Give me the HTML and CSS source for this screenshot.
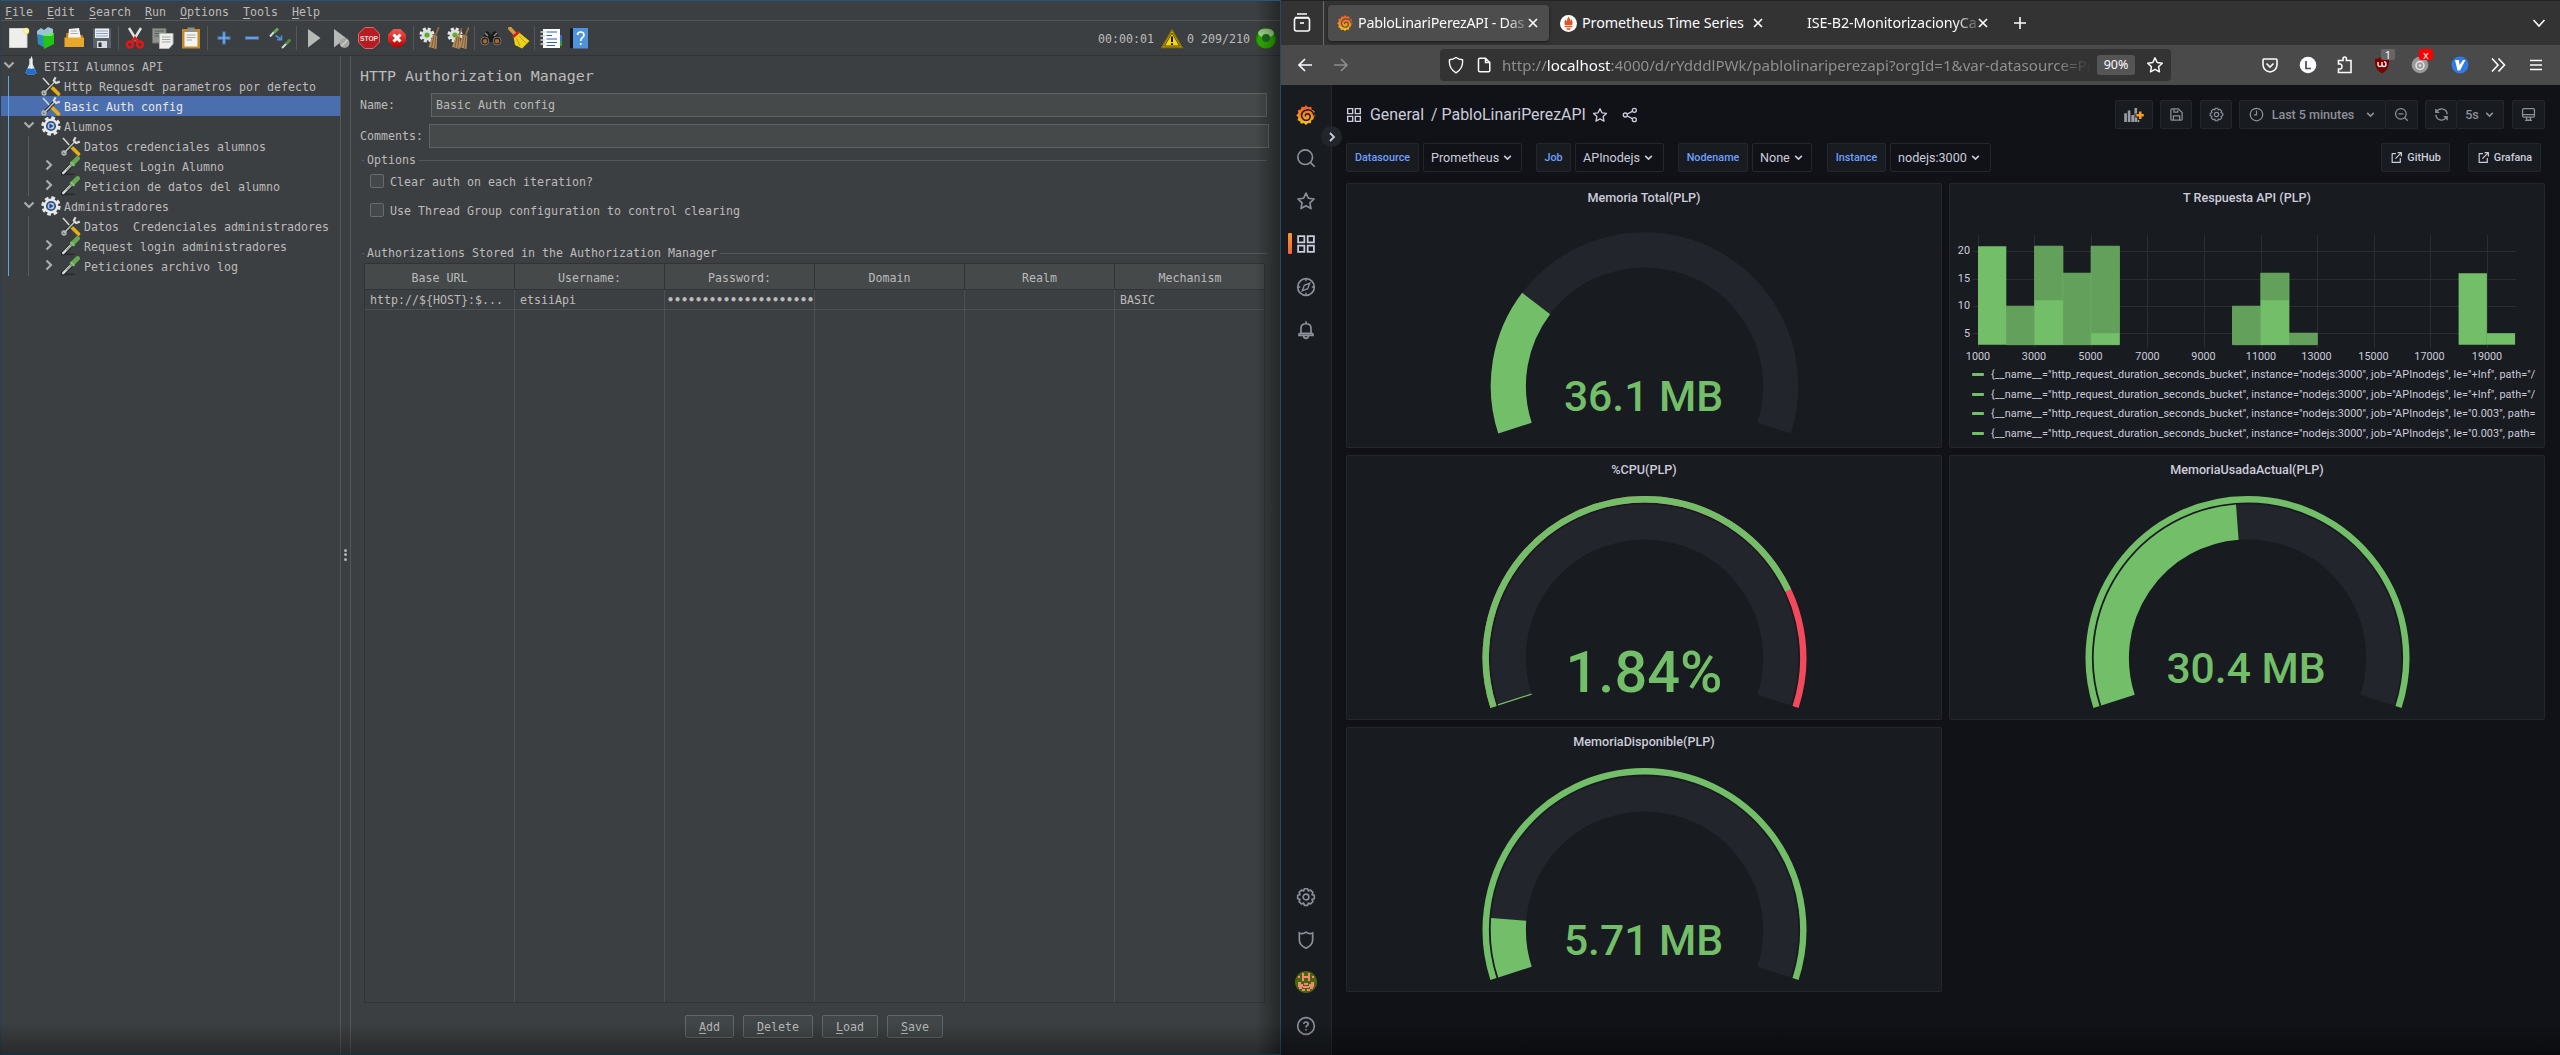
FILE: index.html
```html
<!DOCTYPE html>
<html lang="es">
<head>
<meta charset="utf-8">
<title>PabloLinariPerezAPI - Dashboards</title>
<link rel="stylesheet" href="styles.css">
</head>
<body>
<svg class="defs" width="0" height="0" aria-hidden="true">
  <defs>
    <linearGradient id="g-flame" x1="0" y1="0" x2="0" y2="1"><stop offset="0" stop-color="#f05a28"/><stop offset=".5" stop-color="#f7871f"/><stop offset="1" stop-color="#fbca0a"/></linearGradient>
    <radialGradient id="g-green" cx=".5" cy=".6" r=".55"><stop offset="0" stop-color="#35b505"/><stop offset=".7" stop-color="#2fa800"/><stop offset="1" stop-color="#0c5a00"/></radialGradient>
    <linearGradient id="g-red" x1="0" y1="0" x2="0" y2="1"><stop offset="0" stop-color="#ee5a50"/><stop offset="1" stop-color="#c00000"/></linearGradient>
    <symbol id="tools" viewBox="0 0 20 20"><path d="M2 2L10 11" stroke="#d8d8d4" stroke-width="1.5"/><path d="M10.5 11L17.5 18" stroke="#e8ae10" stroke-width="3.6" stroke-linecap="round"/><path d="M2.5 17.5L14.5 5" stroke="#24282a" stroke-width="3.4"/><path d="M2.5 17.5L14.5 5" stroke="#b9bcb6" stroke-width="1.8"/><circle cx="3" cy="17" r="2" fill="none" stroke="#b9bcb6" stroke-width="1.4"/><path d="M14.6 1.2L12.8 4.6L15 7L18.8 5.6" fill="none" stroke="#d7d9d4" stroke-width="2.2"/></symbol>
    <symbol id="cog" viewBox="0 0 20 20"><circle cx="10" cy="10" r="8" fill="none" stroke="#e4e6e4" stroke-width="3.4" stroke-dasharray="3.6 2.683"/><circle cx="10" cy="10" r="7.4" fill="#e8eae8"/><circle cx="10" cy="10" r="4.2" fill="#b4c6e2" stroke="#34568e" stroke-width="1.8"/><path d="M8.4 7.4V12.600L12.600 10z" fill="#24457e"/></symbol>
    <symbol id="dropper" viewBox="0 0 20 20"><ellipse cx="8" cy="18.2" rx="6.5" ry="1" fill="#2a2d2f"/><path d="M2 17.5L12 7.2" stroke="#1f2224" stroke-width="4.2" stroke-linecap="round"/><path d="M2.2 17.2L12 7.2" stroke="#d5dbd5" stroke-width="2.4" stroke-linecap="round"/><path d="M5.2 14.3L11 8.3" stroke="#6d7a6c" stroke-width="1"/><path d="M11.2 7.8L16.6 2.4" stroke="#66a852" stroke-width="4.6" stroke-linecap="round"/><path d="M9.7 6L13.5 9.9" stroke="#87bf74" stroke-width="1.8"/></symbol>
    <symbol id="flask" viewBox="0 0 20 20"><ellipse cx="10" cy="18" rx="6.5" ry="1.3" fill="#25282a"/><path d="M8.3 2.5H11.7V8L15.5 17Q15.5 18.6 10 18.6Q4.500 18.6 4.500 17L8.300 8z" fill="#dce6ee"/><path d="M6.500 12.500H13.500L15.500 17Q15.500 18.600 10 18.600Q4.500 18.600 4.500 17z" fill="#1f6fd0"/><path d="M10.600 .5V13" stroke="#eef3f7" stroke-width="1"/></symbol>
    <symbol id="down" viewBox="0 0 12 12"><path d="M1.500 3.500L6 8L10.500 3.500" fill="none" stroke="#a9acad" stroke-width="2.200"/></symbol>
    <symbol id="right" viewBox="0 0 12 12"><path d="M3.500 1.500L8 6L3.500 10.500" fill="none" stroke="#a9acad" stroke-width="2.200"/></symbol>
    <symbol id="chev" viewBox="0 0 10 10"><path d="M2 3.500L5 6.500L8 3.500" fill="none" stroke="currentColor" stroke-width="1.400"/></symbol>
    <symbol id="close" viewBox="0 0 12 12"><path d="M2 2L10 10M10 2L2 10" fill="none" stroke="#fbfbfe" stroke-width="1.700"/></symbol>
    <symbol id="flame" viewBox="0 0 24 24"><path d="M12 0L14.300 2.600L18.300 2L18.800 5.600L22.300 7.200L21.600 10.700L23.600 13.500H21.600L21 17L18.500 18.200L17.600 22L14.600 21.600L12 24L9.300 21.700L5.800 22.600L4.900 19.400L1.800 18.200L2.800 14.900L.3 12.300L2.800 9.800L2.200 6.200L5.700 5.300L6.800 1.900L10 2.700z" fill="url(#g-flame)"/><path d="M21.500 12.200C20.500 7.500 16.500 5.500 13 5.900C8.700 6.400 6.200 9.800 6.700 13.400C7.200 16.900 10.500 19 13.800 18.200C17 17.400 18 13.700 16.200 11.600C14.500 9.700 11.500 10.400 11.200 12.800" fill="none" stroke="currentColor" stroke-width="1.800" stroke-linecap="round"/></symbol>
    <symbol id="star" viewBox="0 0 24 24"><path d="M12 2.500L14.900 8.700L21.700 9.600L16.700 14.300L18 21.100L12 17.800L6 21.100L7.300 14.300L2.300 9.600L9.100 8.700z" fill="none" stroke="currentColor" stroke-width="2" stroke-linejoin="round"/></symbol>
    <symbol id="apps" viewBox="0 0 24 24"><path d="M2.500 2.500H10V10H2.500zM14 2.500H21.500V10H14zM2.500 14H10V21.500H2.500zM14 14H21.500V21.500H14z" fill="none" stroke="currentColor" stroke-width="2.100"/></symbol>
    <symbol id="gear" viewBox="0 0 24 24"><path d="M10 2H14L14.800 4.800L17.500 3.700L20.300 6.500L19.200 9.200L22 10V14L19.200 14.800L20.300 17.500L17.500 20.300L14.800 19.200L14 22H10L9.200 19.200L6.500 20.300L3.700 17.500L4.800 14.800L2 14V10L4.800 9.200L3.700 6.500L6.500 3.700L9.200 4.800z" fill="none" stroke="currentColor" stroke-width="1.900" stroke-linejoin="round"/><circle cx="12" cy="12" r="3.500" fill="none" stroke="currentColor" stroke-width="1.900"/></symbol>
    <symbol id="ext" viewBox="0 0 24 24"><path d="M11 5H4V21H19V13M14 3H21V10M21 3L10 14" fill="none" stroke="currentColor" stroke-width="2.200" stroke-linejoin="round"/></symbol>
    <symbol id="brush" viewBox="0 0 12 22"><path d="M11.500 0L8 8" stroke="#8c6a43" stroke-width="1.800"/><path d="M5.500 7.500L9.800 9L9 22L1 20z" fill="#b58c5c"/><path d="M6.500 9L4 20.500M8.300 9.500L7 21" stroke="#70502c" stroke-width=".8"/></symbol>
    <symbol id="wheel" viewBox="0 0 16 16"><circle cx="8" cy="8" r="5.800" fill="none" stroke="#e8e8e8" stroke-width="3.600" stroke-dasharray="2.800 1.750"/><circle cx="8" cy="8" r="5.500" fill="#dedede"/><circle cx="8" cy="8" r="2.600" fill="#5fae28"/></symbol>
  </defs>
</svg>

<div class="desktop">
<section class="jmeter">
  <nav class="menu"><span><u>F</u>ile</span><span><u>E</u>dit</span><span><u>S</u>earch</span><span><u>R</u>un</span><span><u>O</u>ptions</span><span><u>T</u>ools</span><span><u>H</u>elp</span></nav>
  <div class="toolbar">
    <i><svg viewBox="0 0 22 22"><path d="M1.500 1.500H19V20.500H1.500z" fill="#eeeeec" stroke="#d0d0cc"/><circle cx="18" cy="4" r="3.200" fill="#f7ee8a"/><circle cx="18" cy="4" r="1.500" fill="#fff9c8"/></svg></i>
    <i><svg viewBox="0 0 22 22"><path d="M1 4L5 1L8 3L12 0L17 2V9H1z" fill="#9cc4d4"/><path d="M1 7L9 9V21L2 17z" fill="#2b8db8"/><path d="M7 9L18 6V17L8 22z" fill="#22c516"/><path d="M7 9L10 7L18 6L16 9z" fill="#74e867"/></svg></i>
    <i><svg viewBox="0 0 22 22"><path d="M2 6H9L10 8H19V20H2z" fill="#b97a10"/><path d="M5 2L15 1L17 11H4z" fill="#f4f4f2"/><path d="M6.500 4H13M6.500 6.500H14" stroke="#aaa"/><path d="M.5 10.500H20V20H.5z" fill="#e9a828"/></svg></i>
    <i><svg viewBox="0 0 22 22"><path d="M1 1.500H19V21H1z" fill="#59616b"/><path d="M3 1.500H17V11H3z" fill="#e9eef4"/><path d="M4 4H16M4 6.500H16M4 9H16" stroke="#8ea3bd"/><path d="M5 14H15V21H5z" fill="#d8dadc"/><path d="M6.500 15.500H9.500V20H6.500z" fill="#2e3338"/></svg></i>
    <b></b>
    <i><svg viewBox="0 0 22 22"><path d="M5 1L13 14M17 1L9 14" stroke="#e4e4e2" stroke-width="2.400"/><g fill="none" stroke="#e01818" stroke-width="2.600"><circle cx="6" cy="17.500" r="2.900"/><circle cx="16" cy="17.500" r="2.900"/><path d="M8 15L11 11L14 15"/></g></svg></i>
    <i><svg viewBox="0 0 22 22"><path d="M.5 1.500H14V16H.5z" fill="#8f918f" stroke="#6d6f6d"/><path d="M2.500 4H12M2.500 6.500H8M2.500 9H8" stroke="#5a5c5a"/><path d="M7.500 6.500H21V17L17 21.500H7.500z" fill="#eeeeec" stroke="#b5b7b3"/><path d="M10 10H18.500M10 12.500H18.500M10 15H18.500" stroke="#a5a7a3"/></svg></i>
    <i><svg viewBox="0 0 22 22"><path d="M2 2H20V21.500H2z" fill="#c48a28"/><path d="M4.500 5H17.500V19.500H4.500z" fill="#f4f4f2"/><path d="M7.500 .5H14.500V5H7.500z" fill="#8f918f"/><path d="M6.500 8H15.500M6.500 10.500H15.500M6.500 13H12" stroke="#a5a7a3"/></svg></i>
    <b></b>
    <i><svg viewBox="0 0 22 22"><path d="M11 4.500V17.500M4.500 11H17.500" stroke="#3f78be" stroke-width="3.400"/><path d="M11 5.500V16.500M5.500 11H16.500" stroke="#8ab8ee" stroke-width="1.200"/></svg></i>
    <i><svg viewBox="0 0 22 22"><path d="M4 11H18" stroke="#3f78be" stroke-width="3.400"/><path d="M5 11H17" stroke="#8ab8ee" stroke-width="1.200"/></svg></i>
    <i><svg viewBox="0 0 22 22"><path d="M1 9.500L5 5" stroke="#d5dbd5" stroke-width="2"/><path d="M5 5.500L9 1.500" stroke="#66a852" stroke-width="3"/><path d="M13 21L17.500 16.500" stroke="#d5dbd5" stroke-width="2"/><path d="M17 17L21.500 12.500" stroke="#4f8f44" stroke-width="3"/><path d="M6.500 8.500L12.500 12.500M12.500 8.500V12.800H8" fill="none" stroke="#4a8fe0" stroke-width="1.600"/></svg></i>
    <b></b>
    <i><svg viewBox="0 0 22 22"><path d="M6 2L18.500 11L6 20.500z" fill="#b7b9b7"/></svg></i>
    <i><svg viewBox="0 0 22 22"><path d="M4 2L16 11L4 20.500z" fill="#b7b9b7"/><circle cx="14.500" cy="16" r="5" fill="#a3a5a3"/><path d="M11.500 19L17.500 13" stroke="#cfd1cf" stroke-width="1.500"/></svg></i>
    <i><svg class="stop" viewBox="0 0 22 22"><path d="M6.800 .5H15.200L21.500 6.800V15.200L15.200 21.500H6.800L.5 15.200V6.800z" fill="#b71c22" stroke="#d9696c"/><text x="11" y="13.900" textLength="18" lengthAdjust="spacingAndGlyphs">STOP</text></svg></i>
    <i><svg viewBox="0 0 22 22"><path d="M7.500 2H14.500L20 7.500V14.500L14.500 20H7.500L2 14.500V7.500z" fill="url(#g-red)"/><path d="M7.500 7.500L14.500 14.500M14.500 7.500L7.500 14.500" stroke="#fff" stroke-width="3"/></svg></i>
    <b></b>
    <i><svg viewBox="0 0 22 22"><use href="#wheel" width="16" height="16"/><use href="#brush" x="8.500" width="12" height="22"/></svg></i>
    <i><svg viewBox="0 0 22 22"><use href="#wheel" width="16" height="16"/><use href="#brush" x="4" y="1" width="11.500" height="21"/><use href="#brush" x="10.500" width="12" height="22"/></svg></i>
    <b></b>
    <i><svg viewBox="0 0 22 22"><path d="M6 4L9 5L11 8L13 5L16 4L21.500 15H.5z" fill="#1b1b1b"/><path d="M5 6L8 9M17 6L14 9" stroke="#8a8a88" stroke-width="1.500"/><circle cx="4.800" cy="14" r="4" fill="#2a211c" stroke="#777"/><circle cx="17.200" cy="14" r="4" fill="#2a211c" stroke="#777"/><circle cx="5" cy="14.300" r="2.200" fill="#a6662e"/><circle cx="17" cy="14.300" r="2.200" fill="#a6662e"/></svg></i>
    <i><svg viewBox="0 0 22 22"><path d="M2 1.500L8 8" stroke="#d59a3c" stroke-width="3.800" stroke-linecap="round"/><path d="M5.500 9.500L10.500 5L21.500 14L14 21.500L7 18z" fill="#ecd11a"/><path d="M5 10L11 4.800" stroke="#cf2020" stroke-width="2.800"/><path d="M8.500 11L12 19M11 9L18 16" stroke="#b99c10"/></svg></i>
    <b></b>
    <i><svg viewBox="0 0 22 22"><path d="M18 8H22V14H18z" fill="#2f6fd6"/><path d="M18 14H22V19H18z" fill="#2da32d"/><path d="M3 2H20V21H3z" fill="#fdfdfd"/><path d="M6.500 5H17M6.500 8.500H12M6.500 12H17M6.500 15.500H17M6.500 18.500H15" stroke="#2f62b8"/><path d="M.5 5H5M.5 9H5M.5 13H5M.5 17H5" stroke="#d5d5d5" stroke-width="1.500"/></svg></i>
    <i><svg viewBox="0 0 22 22"><path d="M2 1.500H6V21H2z" fill="#15181c"/><path d="M5 1H20V21.500H5z" fill="#4f93dd"/><path d="M9.500 8Q9.500 5 12.700 5T16 8Q16 9.800 14 11Q12.700 12 12.700 14M12.700 16V18" fill="none" stroke="#fff" stroke-width="1.700"/></svg></i>
    <div class="status"><span>00:00:01</span><svg class="warn" viewBox="0 0 22 20"><path d="M11 1L21 18.500H1z" fill="#f5cf00" stroke="#8a7208" stroke-width="1.500"/><path d="M11 4L18.500 17H3.500z" fill="#f8d600" stroke="#2b2500" stroke-width=".8"/><path d="M11 7.500V13M11 14.200V16" stroke="#111" stroke-width="2"/></svg><span>0</span><span class="cnt">209/210</span><svg class="led" viewBox="0 0 22 22"><circle cx="11" cy="11" r="10.500" fill="url(#g-green)"/><ellipse cx="11" cy="6" rx="8" ry="4.600" fill="#cdf0c2" opacity=".7"/><circle cx="11" cy="11" r="4" fill="#1c7022"/></svg></div>
  </div>
  <div class="split">
    <div class="tree">
      <div class="row l0"><svg class="ar"><use href="#down"/></svg><svg class="ic"><use href="#flask"/></svg>ETSII Alumnos API</div>
      <div class="branch main">
        <div class="row l1"><svg class="ic"><use href="#tools"/></svg>Http Requesdt parametros por defecto</div>
        <div class="row l1 sel"><svg class="ic"><use href="#tools"/></svg>Basic Auth config</div>
        <div class="row l1"><svg class="ar"><use href="#down"/></svg><svg class="ic"><use href="#cog"/></svg>Alumnos</div>
        <div class="branch">
          <div class="row l2"><svg class="ic"><use href="#tools"/></svg>Datos credenciales alumnos</div>
          <div class="row l2"><svg class="ar"><use href="#right"/></svg><svg class="ic"><use href="#dropper"/></svg>Request Login Alumno</div>
          <div class="row l2"><svg class="ar"><use href="#right"/></svg><svg class="ic"><use href="#dropper"/></svg>Peticion de datos del alumno</div>
        </div>
        <div class="row l1"><svg class="ar"><use href="#down"/></svg><svg class="ic"><use href="#cog"/></svg>Administradores</div>
        <div class="branch">
          <div class="row l2"><svg class="ic"><use href="#tools"/></svg>Datos  Credenciales administradores</div>
          <div class="row l2"><svg class="ar"><use href="#right"/></svg><svg class="ic"><use href="#dropper"/></svg>Request login administradores</div>
          <div class="row l2"><svg class="ar"><use href="#right"/></svg><svg class="ic"><use href="#dropper"/></svg>Peticiones archivo log</div>
        </div>
      </div>
    </div>
    <div class="grip"><em></em><em></em><em></em></div>
    <div class="editor">
      <h1>HTTP Authorization Manager</h1>
      <div class="field name"><label>Name:</label><div class="input">Basic Auth config</div></div>
      <div class="field comm"><label>Comments:</label><div class="input"></div></div>
      <div class="legend-line opt">Options</div>
      <div class="check c1"><span class="box"></span>Clear auth on each iteration?</div>
      <div class="check"><span class="box"></span>Use Thread Group configuration to control clearing</div>
      <div class="legend-line auth">Authorizations Stored in the Authorization Manager</div>
      <div class="table">
        <div class="th"><span>Base URL</span><span>Username:</span><span>Password:</span><span>Domain</span><span>Realm</span><span>Mechanism</span></div>
        <div class="tr"><span>http://${HOST}:$...</span><span>etsiiApi</span><span class="pw">•••••••••••••••••••••</span><span></span><span></span><span>BASIC</span></div>
        <div class="tr fill"><span></span><span></span><span></span><span></span><span></span><span></span></div>
      </div>
      <div class="buttons"><button><u>A</u>dd</button><button><u>D</u>elete</button><button><u>L</u>oad</button><button><u>S</u>ave</button></div>
    </div>
  </div>
</section>

<section class="browser">
  <div class="tabs">
    <div class="view"><svg width="18" height="20" viewBox="0 0 18 20" fill="none" stroke="#fbfbfe" stroke-width="1.600"><path d="M4 1H14M2 4.500H16"/><rect x="1.500" y="5" width="15" height="13" rx="2"/><path d="M7 10H11"/></svg></div>
    <div class="tab active"><svg class="fav"><use href="#flame"/></svg><span class="tt">PabloLinariPerezAPI - Das</span><svg class="x"><use href="#close"/></svg></div>
    <div class="tab t2"><svg class="fav" viewBox="0 0 18 18"><circle cx="9" cy="9" r="9" fill="#fff"/><path d="M9 1.500Q11 4 10.700 6Q12 5 12 4Q14 7 13 10.500H5Q4 7 6 4.500Q6.200 6 7.200 6.500Q7.500 4 9 1.500zM5 11.500H13V13H5zM6.500 14H11.500Q11 16 9 16T6.500 14z" fill="#e75225"/></svg><span class="tt">Prometheus Time Series</span><svg class="x"><use href="#close"/></svg></div>
    <div class="tab t3"><span class="tt">ISE-B2-MonitorizacionyCa</span><svg class="x"><use href="#close"/></svg></div>
    <svg class="plus" viewBox="0 0 14 14"><path d="M7 1V13M1 7H13" stroke="#fbfbfe" stroke-width="1.600"/></svg>
    <svg class="all" viewBox="0 0 14 14"><path d="M1.500 4L7 10L12.500 4" fill="none" stroke="#fbfbfe" stroke-width="1.600"/></svg>
  </div>
  <div class="nav">
    <svg class="back" viewBox="0 0 16 16"><path d="M15 8H2M8 2L2 8L8 14" fill="none" stroke="#fbfbfe" stroke-width="1.700"/></svg>
    <svg class="fwd" viewBox="0 0 16 16"><path d="M1 8H14M8 2L14 8L8 14" fill="none" stroke="#8c8c8c" stroke-width="1.700"/></svg>
    <div class="url">
      <svg width="16" height="18" viewBox="0 0 16 18"><path d="M8 1.500Q11 3.500 14.500 3.800Q15.500 12.500 8 16.800Q.5 12.500 1.500 3.800Q5 3.500 8 1.500z" fill="none" stroke="#fbfbfe" stroke-width="1.400"/></svg>
      <svg class="doc" width="14" height="16" viewBox="0 0 14 16"><path d="M1.500 2.500Q1.500 1.200 3 1.200H8.500L12.800 5.500V13.500Q12.800 14.800 11.300 14.800H3Q1.500 14.800 1.500 13.500zM8.500 1.500V5.500H12.500" fill="none" stroke="#fbfbfe" stroke-width="1.500"/></svg>
      <span class="addr">http://<strong>localhost</strong>:4000/d/rYdddlPWk/pablolinariperezapi?orgId=1&amp;var-datasource=Pr</span>
      <span class="zoom">90%</span>
      <svg class="bm"><use href="#star"/></svg>
    </div>
    <div class="exts">
      <svg viewBox="0 0 20 20"><path d="M4 4H16Q17 4 17 5V10Q16.500 16 10 17Q3.500 16 3 10V5Q3 4 4 4zM6.500 8.500L10 12L13.500 8.500" fill="none" stroke="#fbfbfe" stroke-width="1.600"/></svg>
      <svg viewBox="0 0 20 20"><circle cx="10" cy="10" r="8.300" fill="#fbfbfe"/><path d="M8 6V13.500H13" fill="none" stroke="#4a4a4a" stroke-width="1.700"/></svg>
      <svg viewBox="0 0 20 20"><path d="M2.500 8V5.500H7V4Q7 2 8.700 2T10.400 4V5.500H15V17.500H2.500V14H4.500Q6 13.500 6 11.500T4.500 9H2.500z" fill="none" stroke="#fbfbfe" stroke-width="1.600"/></svg>
      <div class="ub"><svg viewBox="0 0 20 20"><path d="M10 1.500Q13 3.500 17 4Q18 14 10 18.500Q2 14 3 4Q7 3.500 10 1.500z" fill="#800000"/><path d="M6 7V10Q6 11.500 8 11.500T10 10V7M10 9Q10 11.500 12 11.500T14 9T12 7" fill="none" stroke="#fff" stroke-width="1.300"/></svg><span class="badge">1</span></div>
      <div class="ub"><svg viewBox="0 0 20 20"><circle cx="10" cy="10" r="8.300" fill="#9a9a9a"/><circle cx="10" cy="10.500" r="4" fill="none" stroke="#e5e5e5" stroke-width="1.500"/><circle cx="10" cy="10.500" r="1.300" fill="#e5e5e5"/></svg><span class="badge red">x</span></div>
      <svg viewBox="0 0 20 20"><circle cx="10" cy="10" r="8.500" fill="#2f7bea"/><path d="M5 5H9L9.500 10L13 5H15.500L10 15.500H7.500z" fill="#fff"/></svg>
      <svg viewBox="0 0 20 20"><path d="M4 3.500L10 10L4 16.500M10.500 3.500L16.500 10L10.500 16.500" fill="none" stroke="#fbfbfe" stroke-width="1.600"/></svg>
      <svg viewBox="0 0 20 20"><path d="M4 5.500H16M4 10H16M4 14.500H16" stroke="#fbfbfe" stroke-width="1.600"/></svg>
    </div>
  </div>
  <div class="grafana">
    <aside>
      <svg class="logo"><use href="#flame"/></svg>
      <svg viewBox="0 0 24 24" fill="none" stroke="currentColor" stroke-width="2"><circle cx="11" cy="11" r="8.800"/><path d="M17.500 17.500L22.500 22.500"/></svg>
      <svg><use href="#star"/></svg>
      <div class="cur"><svg><use href="#apps"/></svg></div>
      <svg viewBox="0 0 24 24" fill="none" stroke="currentColor" stroke-width="2"><circle cx="12" cy="12" r="10"/><path d="M16.500 7.500L14 14L7.500 16.500L10 10zM12 2V5M12 19V22M2 12H5M19 12H22" stroke-width="1.600"/></svg>
      <svg viewBox="0 0 24 24" fill="none" stroke="currentColor" stroke-width="2"><path d="M12 1.500V4M6 16V10Q6 4.500 12 4.500T18 10V16M5 16H19Q20.500 16 20.500 18.500H3.500Q3.500 16 5 16zM9 19Q9.500 22 12 22T15 19"/></svg>
      <div class="grow"></div>
      <svg><use href="#gear"/></svg>
      <svg viewBox="0 0 24 24" fill="none" stroke="currentColor" stroke-width="2"><path d="M4 3.500Q8 5.500 12 2.500Q16 5.500 20 3.500V12Q20 18 12 22Q4 18 4 12z"/></svg>
      <svg class="avatar" viewBox="0 0 22 22"><circle cx="11" cy="11" r="11" fill="#4b6410"/><path d="M7 2H9V5H13V2H15V10H13V7H9V10H7zM3 5H5V7H3zM17 5H19V7H17zM3 11H6V13H8V16H7V18H10V20H7V18H4V16H3zM19 11H16V13H14V16H15V18H12V20H15V18H18V16H19zM9 12H13V14H9zM8 15H14V17H8z" fill="#f08a74"/></svg>
      <svg viewBox="0 0 24 24" fill="none" stroke="currentColor" stroke-width="2"><circle cx="12" cy="12" r="10"/><path d="M9.300 9.500Q9.500 7.200 12 7.200T14.700 9.500Q14.700 10.800 13 11.700Q12 12.300 12 13.800M12 15.500V17.500"/></svg>
      <span class="expand"><svg viewBox="0 0 12 12"><path d="M4 2L8 6L4 10" fill="none" stroke="#ccccdc" stroke-width="1.800"/></svg></span>
    </aside>
    <main>
      <header>
        <svg class="ha"><use href="#apps"/></svg><span class="gen">General</span><span class="sl">/</span><span class="dash">PabloLinariPerezAPI</span>
        <svg class="hs"><use href="#star"/></svg>
        <svg class="hsh" viewBox="0 0 24 24" fill="none" stroke="currentColor" stroke-width="2"><circle cx="5" cy="12" r="3"/><circle cx="18.500" cy="5" r="3"/><circle cx="18.500" cy="19" r="3"/><path d="M8 10.500L15.500 6.500M8 13.500L15.500 17.500"/></svg>
        <div class="grow"></div>
        <div class="btn b1"><svg class="wide" viewBox="0 0 22 18"><path d="M1.500 17V7M5.500 17V4M9.500 17V9M13 17V1" stroke="#9a9ba6" stroke-width="3"/><path d="M15 12H17V17H15z" fill="#9a9ba6"/><path d="M17.500 4.500V14.500M12.500 9.500H22" stroke="#181b1f" stroke-width="4.500"/><path d="M18 5V13.500M13.500 9.300H22" stroke="#fb9b1d" stroke-width="3"/></svg></div>
        <div class="btn b2"><svg viewBox="0 0 24 24" fill="none" stroke="currentColor" stroke-width="2"><path d="M3 5Q3 3 5 3H15L21 9V19Q21 21 19 21H5Q3 21 3 19zM8 3V8H14V5M7 21V14H17V21"/></svg></div>
        <div class="btn b3"><svg><use href="#gear"/></svg></div>
        <div class="btn b4"><svg viewBox="0 0 24 24" fill="none" stroke="currentColor" stroke-width="2"><circle cx="12" cy="12" r="10"/><path d="M12 5.500V12.500H8"/></svg><span>Last 5 minutes</span><svg class="cv"><use href="#chev"/></svg></div>
        <div class="btn b5"><svg viewBox="0 0 24 24" fill="none" stroke="currentColor" stroke-width="2"><circle cx="11" cy="11" r="8.500"/><path d="M17 17L22 22M7 11H15"/></svg></div>
        <div class="btn b6"><svg viewBox="0 0 24 24" fill="none" stroke="currentColor" stroke-width="2.200"><path d="M3 3V8.500H8.500M3.800 8Q7 2.500 13 3Q20.500 4 21 11.500M21 21V15.500H15.500M20.200 16Q17 21.500 11 21Q3.500 20 3 12.500"/></svg></div>
        <div class="btn b7"><span>5s</span><svg class="cv"><use href="#chev"/></svg></div>
        <div class="btn b8"><svg viewBox="0 0 24 24" fill="none" stroke="currentColor" stroke-width="2"><path d="M4.500 2.500H19.500Q21.500 2.500 21.500 4.500V14Q21.500 16 19.500 16H4.500Q2.500 16 2.500 14V4.500Q2.500 2.500 4.500 2.500zM2.500 12H21.500M9 16V21H15V16M6.500 21.500H17.500"/></svg></div>
      </header>
      <div class="vars">
        <span class="vl w1">Datasource</span><span class="vv v1">Prometheus<svg class="cv"><use href="#chev"/></svg></span>
        <span class="vl w2">Job</span><span class="vv v2">APInodejs<svg class="cv"><use href="#chev"/></svg></span>
        <span class="vl w3">Nodename</span><span class="vv v3">None<svg class="cv"><use href="#chev"/></svg></span>
        <span class="vl w4">Instance</span><span class="vv v4">nodejs:3000<svg class="cv"><use href="#chev"/></svg></span>
        <div class="grow"></div>
        <span class="lk k1"><svg><use href="#ext"/></svg>GitHub</span><span class="lk k2"><svg><use href="#ext"/></svg>Grafana</span>
      </div>
      <div class="grid">
        <article><h2>Memoria Total(PLP)</h2>
          <svg class="gauge" viewBox="0 0 596 264"><path class="track" d="M168.970 245.090A136.200 136.200 0 1 1 428.030 245.090"/><path class="val" pathLength="100" stroke-dasharray="25.600 200" d="M168.970 245.090A136.200 136.200 0 1 1 428.030 245.090"/><text x="297.500" y="227.500">36.1 MB</text></svg></article>
        <article><h2>T Respuesta API (PLP)</h2>
          <div class="hist">
            <svg viewBox="0 0 596 132" class="plot">
              <path class="gl" d="M24 17.500H567M24 45.500H567M24 72.500H567M24 99.500H567M29.500 1V114M85.500 1V114M142.500 1V114M198.500 1V114M255.500 1V114M312.500 1V114M368.500 1V114M425.500 1V114M481.500 1V114M538.500 1V114"/>
              <g class="dim"><path d="M57.300 72.200h28.300V110.700h-28.300z"/><path d="M85.600 12.200h28.300V110.700h-28.300z"/><path d="M113.900 39.200h28.200V110.700h-28.200z"/><path d="M142.100 12.200h28.300V110.700h-28.300z"/><path d="M283.500 72.200h28.300V110.700h-28.300z"/><path d="M311.800 39.200h28.200V110.700h-28.200z"/><path d="M340 99.200h28.300V110.700H340z"/></g>
              <g class="lit"><path d="M29 12.200h28.300V110.700H29z"/><path d="M85.600 66.200h28.300V110.700h-28.300z"/><path d="M142.100 99.200h28.300V110.700h-28.300z"/><path d="M311.800 66.200h28.200V110.700h-28.200z"/><path d="M509.600 39.200h28.300V110.700h-28.300z"/><path d="M537.900 99.200h28.200V110.700h-28.200z"/></g>
              <g class="yt"><text x="21" y="20">20</text><text x="21" y="48">15</text><text x="21" y="75">10</text><text x="21" y="102.500">5</text></g>
              <g class="xt"><text x="29" y="126">1000</text><text x="85" y="126">3000</text><text x="141.500" y="126">5000</text><text x="198.500" y="126">7000</text><text x="254.500" y="126">9000</text><text x="312" y="126">11000</text><text x="367.500" y="126">13000</text><text x="424.500" y="126">15000</text><text x="480.500" y="126">17000</text><text x="538" y="126">19000</text></g>
            </svg>
            <ul><li>{__name__="http_request_duration_seconds_bucket", instance="nodejs:3000", job="APInodejs", le="+Inf", path="/</li><li>{__name__="http_request_duration_seconds_bucket", instance="nodejs:3000", job="APInodejs", le="+Inf", path="/</li><li>{__name__="http_request_duration_seconds_bucket", instance="nodejs:3000", job="APInodejs", le="0.003", path=</li><li>{__name__="http_request_duration_seconds_bucket", instance="nodejs:3000", job="APInodejs", le="0.003", path=</li></ul>
          </div></article>
        <article><h2>%CPU(PLP)</h2>
          <svg class="gauge" viewBox="0 0 596 264"><path class="track" d="M168.970 245.090A136.200 136.200 0 1 1 428.030 245.090"/><path class="val" pathLength="100" stroke-dasharray=".25 200" d="M168.970 245.090A136.200 136.200 0 1 1 428.030 245.090"/><path class="ring hot" d="M147.470 252.070A158.800 158.800 0 1 1 449.530 252.070"/><path class="ring" pathLength="100" stroke-dasharray="80 200" d="M147.470 252.070A158.800 158.800 0 1 1 449.530 252.070"/><text class="big" x="298" y="237">1.84%</text></svg></article>
        <article><h2>MemoriaUsadaActual(PLP)</h2>
          <svg class="gauge" viewBox="0 0 596 264"><path class="track" d="M168.970 245.090A136.200 136.200 0 1 1 428.030 245.090"/><path class="val" pathLength="100" stroke-dasharray="48 200" d="M168.970 245.090A136.200 136.200 0 1 1 428.030 245.090"/><path class="ring" d="M147.470 252.070A158.800 158.800 0 1 1 449.530 252.070"/><text x="297" y="227.500">30.4 MB</text></svg></article>
        <article><h2>MemoriaDisponible(PLP)</h2>
          <svg class="gauge" viewBox="0 0 596 264"><path class="track" d="M168.970 245.090A136.200 136.200 0 1 1 428.030 245.090"/><path class="val" pathLength="100" stroke-dasharray="10.400 200" d="M168.970 245.090A136.200 136.200 0 1 1 428.030 245.090"/><path class="ring" d="M147.470 252.070A158.800 158.800 0 1 1 449.530 252.070"/><text x="297.500" y="227.500">5.71 MB</text></svg></article>
      </div>
    </main>
  </div>
</section>
</div>
</body>
</html>
```
FILE: styles.css
```css
* { box-sizing: border-box; }
body { margin: 0; background: #111217; }
.defs { position: absolute; }
svg { display: block; flex: none; }
.desktop { position: relative; display: flex; width: 2560px; height: 1055px; overflow: hidden; }
.desktop::after { content: ""; position: absolute; left: 0; right: 0; bottom: 0; height: 32px; background: linear-gradient(transparent, rgba(0, 0, 0, .35)); pointer-events: none; }
.grow { flex: 1; }

/* JMeter window */
.jmeter { position: relative; width: 1281px; height: 1055px; display: flex; flex-direction: column; background: #3c3f41; border: 1px solid #23486a; border-top-color: #205680; border-left-color: #2c3e50; color: #bbb; font: 11.630px/20px "DejaVu Sans Mono", "Liberation Mono", monospace; }
.jmeter::after { content: ""; position: absolute; top: 0; right: 0; bottom: 0; width: 24px; background: linear-gradient(90deg, transparent, rgba(0, 0, 0, .38)); pointer-events: none; }
.jmeter u { text-underline-offset: 2px; }
.menu { display: flex; gap: 14px; height: 20px; padding-left: 4px; line-height: 22px; border-bottom: 1px solid #565656; }
.toolbar { display: flex; align-items: center; height: 35px; padding-left: 3.600px; border-bottom: 1px solid #313335; }
.toolbar i { width: 28px; height: 22px; padding-left: 3px; }
.toolbar i svg { width: 22px; height: 22px; }
.toolbar b { width: 1px; height: 24px; margin: 0 1.900px; background: #555759; }
.stop text { font: bold 7.500px "Liberation Sans", sans-serif; fill: #f4dcdc; text-anchor: middle; }
.status { display: flex; align-items: center; margin-left: auto; margin-right: 3px; line-height: 22px; padding-top: 1px; }
.warn { width: 22px; height: 20px; margin: 0 4px 0 7px; }
.cnt { margin-left: 7px; }
.led { width: 22px; height: 22px; margin-left: 5px; margin-top: -1px; }
.split { flex: 1; display: flex; min-height: 0; }
.tree { width: 340px; border-right: 1px solid #555759; }
.row { display: flex; align-items: center; height: 20px; line-height: 22px; padding-top: 1px; white-space: pre; }
.row .ic { width: 20px; height: 20px; margin-right: 3px; margin-top: -2px; }
.row .ar { width: 12px; height: 12px; margin-top: -3px; }
.l0 { padding-left: 2px; }
.l0 .ar { margin-right: 6px; }
.l1 { padding-left: 40px; }
.l1 .ar { margin: -3px 6px 0 -18px; }
.l2 { padding-left: 60px; }
.l2 .ar { margin: -3px 6px 0 -18px; }
.branch { position: relative; }
.branch::before { content: ""; position: absolute; left: 27px; top: 0; bottom: 0; width: 1px; background: #585b5d; }
.branch.main::before { left: 7px; background: #59a9e8; z-index: 1; }
.sel { background: #4b6eaf; color: #e6e6e6; }
.grip { width: 10px; border-right: 1px solid #555759; display: flex; flex-direction: column; align-items: center; justify-content: center; gap: 1.500px; padding-bottom: 1px; }
.grip em { width: 3px; height: 3px; border-radius: 50%; background: #afb1b3; }
.editor { flex: 1; display: flex; flex-direction: column; padding: 8px 11px 16px 8px; min-width: 0; }
.editor h1 { margin: 0; font-size: 14.950px; font-weight: 400; line-height: 24px; padding-left: 1px; height: 28px; }
.field { display: flex; align-items: center; height: 24px; padding-left: 1px; }
.field label { width: 71px; line-height: 24px; }
.input { flex: 1; height: 24px; border: 1px solid #646464; background: #45494a; padding-left: 4px; line-height: 23px; }
.name { margin-bottom: 7px; margin-top: 1px; padding-right: 2px; }
.comm label { width: 69px; }
.legend-line { display: flex; align-items: center; height: 20px; gap: 3px; padding-left: 3px; padding-right: 2px; }
.legend-line::before { content: ""; width: 2px; height: 1px; background: #5c5f61; }
.legend-line::after { content: ""; flex: 1; height: 1px; background: #555759; }
.opt { margin-top: 2px; }
.check { display: flex; align-items: center; gap: 6px; height: 29px; padding-left: 11px; line-height: 30px; }
.c1 { margin-top: -3px; }
.box { width: 14px; height: 14px; border: 1px solid #6b6b6b; border-radius: 2px; background: #43494a; margin-top: -1px; }
.auth { margin-top: 18px; }
.table { flex: 1; display: flex; flex-direction: column; margin: 0 4px 12px 5px; border: 1px solid #313335; min-height: 0; }
.th, .tr { display: grid; grid-template-columns: repeat(6, 150px); }
.th { height: 26px; background: #45494a; border-bottom: 1px solid #313335; text-align: center; line-height: 29px; }
.th span { border-right: 1px solid #313335; }
.tr { height: 20px; border-bottom: 1px solid #4d5052; line-height: 21px; }
.tr span { border-right: 1px solid #4d5052; padding-left: 5px; overflow: hidden; }
.tr .pw { padding-left: 2px; font-weight: 700; }
.th span:last-child, .tr span:last-child { border-right: 0; }
.tr.fill { flex: 1; border: 0; }
.buttons { display: flex; justify-content: center; gap: 9px; height: 23px; }
.buttons button { height: 23px; border: 1px solid #646769; border-radius: 2px; background: #414748; box-shadow: 0 1px 0 #323537; color: #bbb; font: inherit; line-height: 22px; padding: 0 13px; }

/* Browser chrome */
.browser { flex: 1; display: flex; flex-direction: column; background: #333; color: #fbfbfe; font: 14.300px/20px "Noto Sans", sans-serif; min-width: 0; border-top: 1px solid #222; }
.tabs { display: flex; align-items: center; height: 44px; }
.view { width: 43px; height: 44px; display: flex; align-items: center; padding-left: 12px; border-right: 1px solid #6a6a6a; }
.tab { display: flex; align-items: center; height: 36px; border-radius: 4px; white-space: nowrap; }
.active { width: 221px; margin-left: 4px; padding-left: 9px; background: #4d4d4d; box-shadow: 0 1px 3px #1a1a1a; }
.tt { flex: none; }
.active .tt, .t3 .tt { mask-image: linear-gradient(90deg, #000 calc(100% - 22px), rgba(0, 0, 0, .2)); }
.active .fav { width: 16px; height: 16px; margin-right: 5px; color: #4d4d4d; }
.active .tt { width: 169px; letter-spacing: -.25px; }
.x { width: 12px; height: 12px; }
.t2 { margin-left: 11px; }
.t2 .fav { width: 17px; height: 17px; margin-right: 5px; }
.t2 .tt { width: 170px; letter-spacing: -.05px; }
.t3 { margin-left: 43px; }
.t3 .tt { width: 170px; letter-spacing: -.1px; }
.plus { width: 14px; height: 14px; margin-left: 24px; }
.all { width: 14px; height: 14px; margin-left: auto; margin-right: 14px; }
.nav { display: flex; align-items: center; height: 40px; background: #4a4a4a; padding-left: 16px; }
.back, .fwd { width: 16px; height: 16px; }
.fwd { margin-left: 20px; }
.url { display: flex; align-items: center; width: 731px; height: 32px; margin-left: 91px; background: #333; border-radius: 4px; padding-left: 8px; font-size: 15.100px; }
.doc { margin-left: 13px; }
.addr { flex: 1; min-width: 0; margin-left: 11px; white-space: nowrap; color: #8f8f8f; mask-image: linear-gradient(90deg, #000 calc(100% - 34px), transparent); }
.addr strong { color: #fbfbfe; font-weight: 400; }
.zoom { flex: none; width: 38px; height: 20px; margin-left: 6px; border-radius: 3px; background: #555; text-align: center; font-size: 12.500px; }
.bm { width: 18px; height: 18px; margin: 0 7px 0 11px; }
.exts { display: flex; justify-content: space-between; width: 286px; margin-left: 89px; }
.exts svg { width: 20px; height: 20px; }
.ub { position: relative; left: -2px; }
.badge { position: absolute; left: 9px; top: -6px; width: 14px; height: 11px; border-radius: 2px; background: #666; font-size: 11px; line-height: 11px; text-align: center; }
.red { background: #f00; }

/* Grafana */
.grafana { flex: 1; display: flex; background: #111217; color: #ccccdc; font: 12.600px/20px Roboto, sans-serif; min-height: 0; }
aside { position: relative; width: 51px; display: flex; flex-direction: column; align-items: center; gap: 23px; padding: 20px 1px 19px 0; background: #181b1f; border-right: 1px solid #25272c; color: #8e8f99; }
aside svg { width: 20px; height: 20px; }
aside .logo { color: #181b1f; }
.cur { position: relative; color: #ccccdc; }
.cur::before { content: ""; position: absolute; left: -8px; top: -1px; width: 4px; height: 21px; border-radius: 1px; background: linear-gradient(#ff9830, #f55f3e); }
aside .avatar { width: 22px; height: 22px; margin-top: -2px; }
.expand { position: absolute; left: 40px; top: 41px; width: 21px; height: 21px; display: grid; place-items: center; border-radius: 50%; background: #22252b; }
.expand svg { width: 12px; height: 12px; }
main { flex: 1; display: flex; flex-direction: column; padding: 15px 15px 0 14px; min-width: 0; }
header { display: flex; align-items: center; height: 29px; font-size: 15.900px; white-space: nowrap; }
.ha { width: 16px; height: 16px; margin-right: 8px; }
.sl { margin: 0 4px 0 7px; }
.hs { width: 16px; height: 16px; margin-left: 6px; }
.hsh { width: 16px; height: 16px; margin-left: 14px; }
.btn { display: flex; align-items: center; justify-content: center; height: 29px; border: 1px solid #24262c; background: #181b1f; border-radius: 2px; color: #8e8f99; font-size: 12.600px; font-weight: 500; }
.btn svg { width: 15px; height: 15px; }
.btn .cv { width: 11px; height: 11px; }
.btn .wide { width: 22px; height: 16px; }
.b1 { width: 38px; margin-right: 7px; }
.b2 { width: 32px; margin-right: 8px; }
.b3 { width: 32px; margin-right: 7px; }
.b4 { width: 147px; }
.b4 span { margin: 0 11px 0 8px; letter-spacing: -.05px; }
.b5 { width: 32px; margin-right: 7px; border-left: 0; }
.b6 { width: 32px; }
.b7 { width: 47px; margin-right: 8px; border-left: 0; gap: 5px; }
.b8 { width: 33px; }
.vars { display: flex; height: 29px; margin-top: 14px; white-space: nowrap; }
.vars > span { display: flex; align-items: center; justify-content: center; height: 29px; border: 1px solid #24262c; border-radius: 2px; }
.vl { background: #181b1f; color: #6e9fff; font-size: 10.800px; font-weight: 500; margin-right: 4px; }
.vars .vv { gap: 3px; justify-content: flex-start; padding-left: 7px; }
.vv svg { width: 11px; height: 11px; }
.w1 { width: 73px; } .v1 { width: 99px; margin-right: 14px; }
.w2 { width: 35px; } .v2 { width: 89px; margin-right: 14px; }
.w3 { width: 70px; } .v3 { width: 60px; margin-right: 15px; }
.w4 { width: 59px; } .v4 { width: 101px; }
.lk { background: #181b1f; font-size: 10.800px; font-weight: 500; gap: 4px; }
.lk svg { width: 13px; height: 13px; }
.k1 { width: 69px; margin-right: 18px; }
.k2 { width: 73px; margin-right: 4px; }
.grid { display: grid; grid-template-columns: 596px 596px; grid-auto-rows: 264.500px; gap: 7.500px 7px; margin-top: 11px; }
article { position: relative; border: 1px solid #24262c; border-radius: 2px; background: #181b1f; overflow: hidden; }
h2 { margin: 4px 0 0; text-align: center; font-size: 12.600px; line-height: 20px; font-weight: 500; }
.gauge { position: absolute; left: -1px; top: -1px; width: 596px; height: 264px; }
.gauge path { fill: none; }
.track { stroke: #22252b; stroke-width: 35.200; }
.val { stroke: #73bf69; stroke-width: 35.200; }
.ring { stroke: #73bf69; stroke-width: 6.400; }
.ring.hot { stroke: #f2495c; }
.gauge text { fill: #73bf69; font-size: 42.600px; font-weight: 500; text-anchor: middle; }
.gauge .big { font-size: 57.700px; }
.hist { margin: 26px -1px 0; }
.plot { width: 596px; height: 132px; }
.gl { stroke: #2a2d31; }
.dim { fill: #63a05b; stroke: #6ab262; stroke-width: .8; }
.lit { fill: #73bf69; }
.plot text { font-size: 10.800px; fill: #ccccdc; }
.yt { text-anchor: end; }
.xt { text-anchor: middle; }
ul { margin: -1px 0 0 23px; padding: 0; list-style: none; font-size: 10.800px; line-height: 19.600px; letter-spacing: .1px; }
li { display: flex; align-items: center; white-space: nowrap; }
li::before { content: ""; flex: none; width: 12px; height: 3px; margin-right: 7px; border-radius: 1px; background: #73bf69; }
```
